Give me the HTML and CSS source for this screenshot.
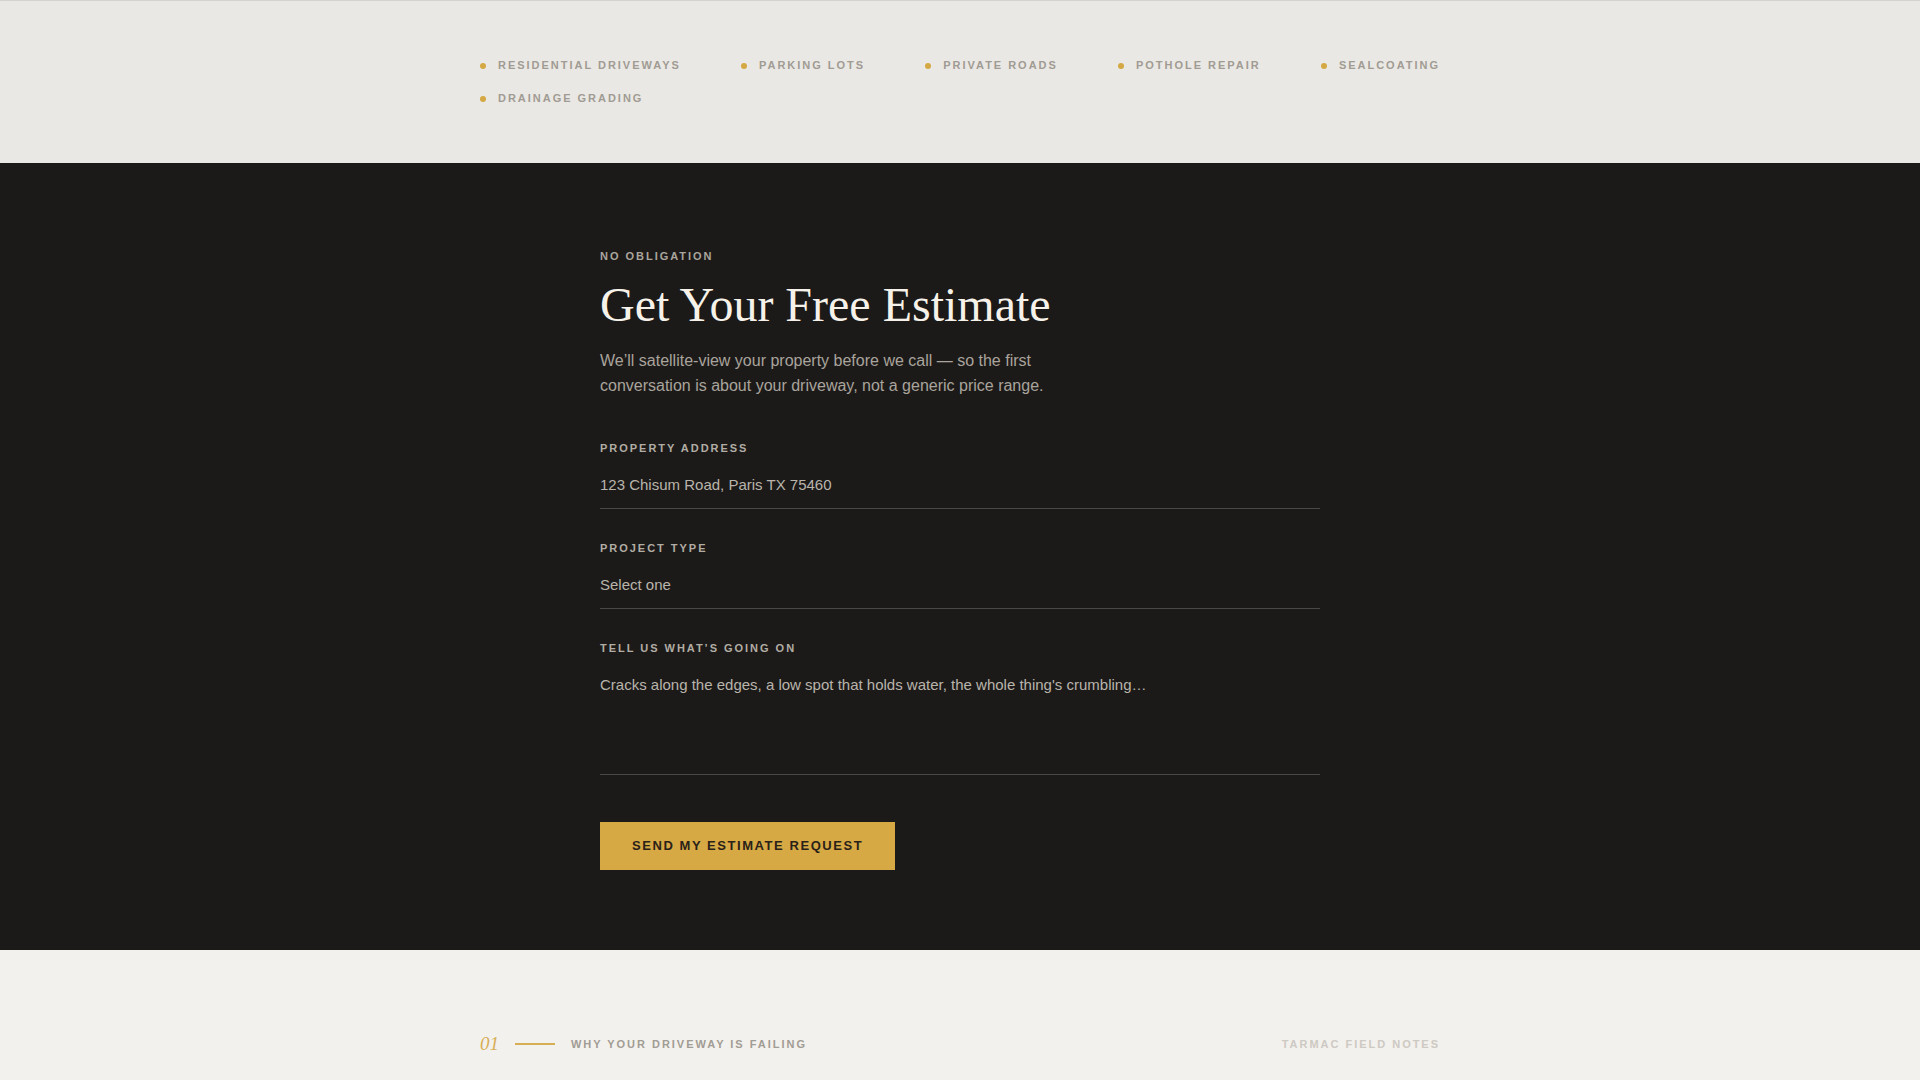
FILE: index.html
```html
<!DOCTYPE html>
<html lang="en">

<head>
  <title>Free Estimate</title>
  <meta charset="utf-8">
  <meta name="viewport" content="width=device-width, initial-scale=1">
  <link rel="stylesheet" href="styles.css">
</head>

<body>
  <!-- Services strip -->
  <div class="services">
    <ul class="service-list">
      <li>Residential Driveways</li>
      <li>Parking Lots</li>
      <li>Private Roads</li>
      <li>Pothole Repair</li>
      <li>Sealcoating</li>
      <li>Drainage Grading</li>
    </ul>
  </div>

  <!-- Estimate form -->
  <div class="estimate">
    <form class="estimate-form" action="#">
      <p class="eyebrow">No Obligation</p>
      <h2 class="estimate-title">Get Your Free Estimate</h2>
      <p class="lead">We’ll satellite-view your property before we call — so the first conversation is about your driveway, not a generic price range.</p>

      <div class="field">
        <label for="address">Property Address</label>
        <input id="address" type="text" placeholder="123 Chisum Road, Paris TX 75460">
      </div>

      <div class="field">
        <label for="project">Project Type</label>
        <select id="project">
          <option value="">Select one</option>
          <option value="driveway">Residential Driveway</option>
          <option value="lot">Parking Lot</option>
          <option value="road">Private Road</option>
          <option value="pothole">Pothole Repair</option>
          <option value="seal">Sealcoating</option>
          <option value="drainage">Drainage Grading</option>
        </select>
      </div>

      <div class="field">
        <label for="details">Tell Us What’s Going On</label>
        <textarea id="details" placeholder="Cracks along the edges, a low spot that holds water, the whole thing's crumbling…"></textarea>
      </div>

      <button type="submit" class="send">Send My Estimate Request</button>
    </form>
  </div>

  <!-- Field notes intro -->
  <div class="notes">
    <div class="notes-head">
      <span class="notes-num">01</span>
      <span class="notes-rule"></span>
      <span class="notes-title">Why Your Driveway Is Failing</span>
      <span class="notes-brand">Tarmac Field Notes</span>
    </div>
  </div>
</body>

</html>
```

FILE: styles.css
```css
* {
  box-sizing: border-box;
}

body {
  margin: 0;
  font-family: 'Liberation Sans', Arial, sans-serif;
  background-color: #f3f1ed;
  color: #1c1a19;
}

/* Services strip along the top */
.services {
  background-color: #eae8e4;
  border-top: 1px solid #d6d3ce;
  padding: 56px 0;
}

.service-list {
  max-width: 960px;
  margin: 0 auto;
  padding: 0;
  list-style: none;
  display: flex;
  flex-wrap: wrap;
  justify-content: space-between;
  row-gap: 16px;
  column-gap: 40px;
}

.service-list li {
  display: flex;
  align-items: center;
  gap: 12px;
  font-size: 11px;
  line-height: 17px;
  font-weight: 700;
  letter-spacing: 0.18em;
  text-transform: uppercase;
  color: #a09b93;
}

.service-list li::before {
  content: "";
  width: 6px;
  height: 6px;
  border-radius: 50%;
  background-color: #d4a843;
}

/* Dark estimate block */
.estimate {
  background-color: #1c1a19;
  padding: 85px 0 80px;
}

.estimate-form {
  max-width: 720px;
  margin: 0 auto;
}

.eyebrow {
  margin: 0 0 15px;
  font-size: 11px;
  line-height: 16px;
  font-weight: 700;
  letter-spacing: 0.18em;
  text-transform: uppercase;
  color: #aaa59d;
}

.estimate-title {
  margin: 0 0 16px;
  font-family: 'Liberation Serif', 'Times New Roman', serif;
  font-weight: 400;
  font-size: 48px;
  line-height: 1.1;
  color: #f6f2ea;
}

.lead {
  margin: 0 0 41px;
  max-width: 460px;
  font-size: 16px;
  line-height: 1.6;
  color: #a9a49c;
}

.field {
  margin-bottom: 31px;
}

.field label {
  display: block;
  margin-bottom: 8px;
  font-size: 11px;
  line-height: 16px;
  font-weight: 700;
  letter-spacing: 0.18em;
  text-transform: uppercase;
  color: #b2ada4;
}

.field input,
.field select,
.field textarea {
  display: block;
  width: 100%;
  margin: 0;
  padding: 10px 0 12px;
  border: none;
  border-bottom: 1px solid #4a4744;
  border-radius: 0;
  background: transparent;
  font-family: 'Liberation Sans', Arial, sans-serif;
  font-size: 15px;
  line-height: 22px;
  color: #b9b4ab;
  outline: none;
}

.field input,
.field select {
  height: 45px;
}

.field select {
  -webkit-appearance: none;
  appearance: none;
}

.field textarea {
  height: 111px;
  resize: none;
}

.field input::placeholder,
.field textarea::placeholder {
  color: #b9b4ab;
  opacity: 1;
}

.send {
  margin-top: 16px;
  padding: 16px 32px;
  border: none;
  border-radius: 0;
  background-color: #d6a945;
  font-family: 'Liberation Sans', Arial, sans-serif;
  font-size: 13px;
  line-height: 16px;
  font-weight: 700;
  letter-spacing: 0.12em;
  text-transform: uppercase;
  color: #2a2118;
  cursor: pointer;
}

/* Field notes heading row */
.notes {
  background-color: #f3f1ed;
  padding: 84px 0 120px;
}

.notes-head {
  max-width: 960px;
  margin: 0 auto;
  display: flex;
  align-items: center;
  gap: 16px;
  line-height: 20px;
}

.notes-num {
  font-family: 'Liberation Serif', 'Times New Roman', serif;
  font-style: italic;
  font-size: 19px;
  color: #d6ae55;
}

.notes-rule {
  width: 40px;
  height: 2px;
  background-color: #d6ae55;
}

.notes-title,
.notes-brand {
  font-size: 11px;
  font-weight: 700;
  letter-spacing: 0.18em;
  text-transform: uppercase;
  color: #a19c94;
}

.notes-brand {
  margin-left: auto;
  color: #cdc9c3;
}
```
